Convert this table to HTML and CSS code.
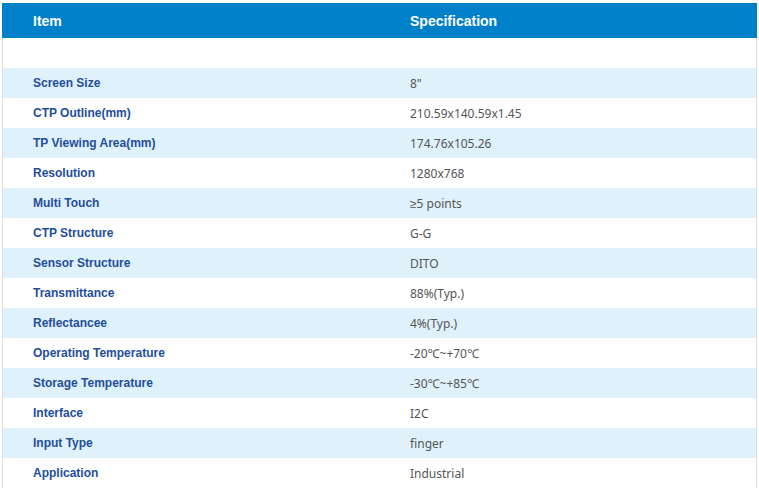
FILE: index.html
```html
<!DOCTYPE html>
<html>
<head>
<meta charset="utf-8">
<link rel="stylesheet" href="styles.css">
</head>
<body>
<div class="wrap">
  <div class="spec">
    <div class="row head"><div class="k">Item</div><div class="v">Specification</div></div>
    <div class="row blank"><div class="k"></div><div class="v"></div></div>
    <div class="row alt"><div class="k">Screen Size</div><div class="v">8"</div></div>
    <div class="row"><div class="k">CTP Outline(mm)</div><div class="v">210.59x140.59x1.45</div></div>
    <div class="row alt"><div class="k">TP Viewing Area(mm)</div><div class="v">174.76x105.26</div></div>
    <div class="row"><div class="k">Resolution</div><div class="v">1280x768</div></div>
    <div class="row alt"><div class="k">Multi Touch</div><div class="v">≥5 points</div></div>
    <div class="row"><div class="k">CTP Structure</div><div class="v">G-G</div></div>
    <div class="row alt"><div class="k">Sensor Structure</div><div class="v">DITO</div></div>
    <div class="row"><div class="k">Transmittance</div><div class="v">88%(Typ.)</div></div>
    <div class="row alt"><div class="k">Reflectancee</div><div class="v">4%(Typ.)</div></div>
    <div class="row"><div class="k">Operating Temperature</div><div class="v">-20℃~+70℃</div></div>
    <div class="row alt"><div class="k">Storage Temperature</div><div class="v">-30℃~+85℃</div></div>
    <div class="row"><div class="k">Interface</div><div class="v">I2C</div></div>
    <div class="row alt"><div class="k">Input Type</div><div class="v">finger</div></div>
    <div class="row"><div class="k">Application</div><div class="v">Industrial</div></div>
  </div>
</div>
</body>
</html>
```
FILE: styles.css
```css
html, body {
  margin: 0;
  padding: 0;
  background: #ffffff;
}
.wrap {
  padding: 3px 0 0 2px;
}
.spec {
  width: 755px;
  display: flex;
  flex-direction: column;
}
.row {
  display: grid;
  grid-template-columns: 377px 1fr;
  height: 30px;
  align-items: center;
  border-left: 1px solid #dddddd;
  border-right: 1px solid #dddddd;
}
.row.head {
  height: 35px;
  background: #0080c9;
  border-color: #0080c9;
}
.row.alt {
  background: #dff1fb;
}
.k {
  padding-left: 30px;
  font-family: "Liberation Sans", Arial, sans-serif;
  font-weight: bold;
  font-size: 12px;
  color: #1f4e9c;
}
.v {
  padding-left: 30px;
  font-family: "Noto Sans", sans-serif;
  font-size: 12px;
  color: #555555;
}
.head .k, .head .v {
  font-family: "Liberation Sans", Arial, sans-serif;
  font-weight: bold;
  font-size: 14px;
  color: #ffffff;
}
```
